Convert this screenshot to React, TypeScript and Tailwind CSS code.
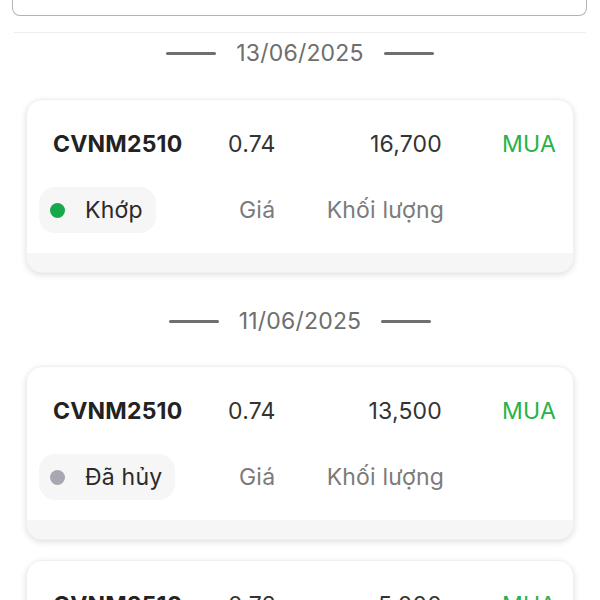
import React from "react";

type Order = {
  symbol: string;
  price: string;
  volume: string;
  side: string;
  status: string;
  matched: boolean;
};

function DateHeader({ date }: { date: string }) {
  return (
    <div className="flex h-[40px] items-center justify-center gap-[20px]">
      <div className="h-[3px] w-[50px] rounded-full bg-[#6f6f6f]" />
      <span className="text-[23px] leading-none tracking-[0.2px] text-[#6e6e6e]">{date}</span>
      <div className="h-[3px] w-[50px] rounded-full bg-[#6f6f6f]" />
    </div>
  );
}

function Card({ o }: { o: Order }) {
  return (
    <div className="mx-[26px] overflow-hidden rounded-[16px] border border-[#f0f0f0] bg-white shadow-[0_2px_6px_rgba(0,0,0,0.13)]">
      <div className="mt-[29px] flex h-[30px] items-center pl-[26px] pr-[17px] text-[23px] tracking-[0.2px]">
        <div className="w-[175px] font-bold text-[#222]">{o.symbol}</div>
        <div className="w-[80px] text-[#333]">{o.price}</div>
        <div className="w-[134px] text-right text-[#333]">{o.volume}</div>
        <div className="ml-auto text-[#27b24a]">{o.side}</div>
      </div>
      <div className="mt-[28px] flex h-[46px] items-center pl-[12px] text-[23px] tracking-[0.2px]">
        <div className="w-[189px]">
          <div className="inline-flex h-[46px] items-center gap-[20px] rounded-[16px] bg-[#f6f6f6] pl-[11px] pr-[13px]">
            <span
              className={
                o.matched
                  ? "h-[15px] w-[15px] rounded-full bg-[#15a94a]"
                  : "h-[15px] w-[15px] rounded-full bg-[#a9a8b2]"
              }
            />
            <span className="text-[#2a2a2a]">{o.status}</span>
          </div>
        </div>
        <div className="w-[80px] pl-[11px] text-[#7b7b7b]">Giá</div>
        <div className="w-[136px] text-right text-[#7b7b7b]">Khối lượng</div>
      </div>
      <div className="mt-[20px] h-[19px] bg-[#f6f6f6]" />
    </div>
  );
}

export default function App() {
  const a: Order = { symbol: "CVNM2510", price: "0.74", volume: "16,700", side: "MUA", status: "Khớp", matched: true };
  const b: Order = { symbol: "CVNM2510", price: "0.74", volume: "13,500", side: "MUA", status: "Đã hủy", matched: false };
  const c: Order = { symbol: "CVNM2510", price: "0.72", volume: "5,000", side: "MUA", status: "Đã hủy", matched: false };
  return (
    <div
      className="h-[600px] w-[600px] overflow-hidden bg-white"
      style={{ fontFamily: "Inter, 'Noto Sans', sans-serif" }}
    >
      <div className="mx-[12px] mr-[13px] h-[16px] rounded-b-[8px] border-x border-b border-[#b3b3b3]" />
      <div className="mx-[14px] mt-[16px] border-t border-[#eeeeee]" />
      <DateHeader date="13/06/2025" />
      <div className="mt-[26px]">
        <Card o={a} />
      </div>
      <div className="mt-[28px]">
        <DateHeader date="11/06/2025" />
      </div>
      <div className="mt-[25px] flex flex-col gap-[20px]">
        <Card o={b} />
        <Card o={c} />
      </div>
    </div>
  );
}
